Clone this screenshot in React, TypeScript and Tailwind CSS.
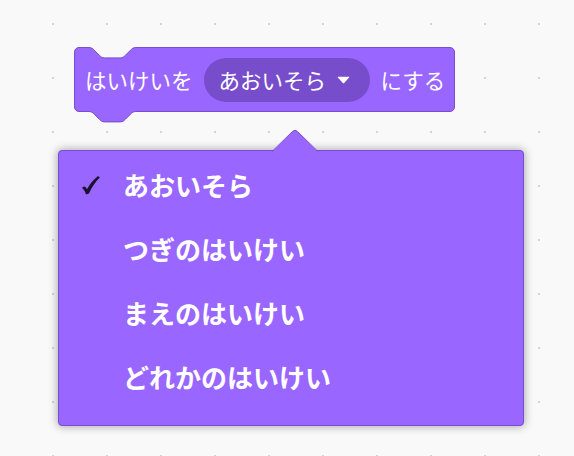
import React from "react";

const W = 381;
const H = 65;
const blockPath = `M 0.5,5 a 4.5,4.5 0 0 1 4.5,-4.5 H 15 c 2.6,0 3.9,1.3 5.2,2.6 l 5.2,5.2 c 1.3,1.3 2.6,2.6 5.2,2.6 h 15.6 c 2.6,0 3.9,-1.3 5.2,-2.6 l 5.2,-5.2 c 1.3,-1.3 2.6,-2.6 5.2,-2.6 H ${W - 5} a 4.5,4.5 0 0 1 4.5,4.5 V ${H - 5} a 4.5,4.5 0 0 1 -4.5,4.5 H 61.8 c -2.6,0 -3.9,1.3 -5.2,2.6 l -5.2,5.2 c -1.3,1.3 -2.6,2.6 -5.2,2.6 h -15.6 c -2.6,0 -3.9,-1.3 -5.2,-2.6 l -5.2,-5.2 c -1.3,-1.3 -2.6,-2.6 -5.2,-2.6 H 5 a 4.5,4.5 0 0 1 -4.5,-4.5 Z`;

const font = { fontFamily: '"Noto Sans CJK JP", "Noto Sans", sans-serif' };

function Check() {
  return (
    <svg width="20" height="20" viewBox="0 0 20 20" className="block">
      <path
        d="M 1.5,12.2 C 3.2,10.8 4.8,11.8 6,14.2 C 8.8,9.2 12.4,4.6 17,1 L 18.8,2.6 C 14.2,7.2 10.6,12.4 8,18.6 L 5,19.4 C 4.2,16.8 3,14.6 1.5,13.6 Z"
        fill="#1d1130"
      />
    </svg>
  );
}

const items = ["あおいそら", "つぎのはいけい", "まえのはいけい", "どれかのはいけい"];

export default function App() {
  return (
    <div
      className="relative w-[574px] h-[456px] overflow-hidden bg-[#f9f9f9] bg-[radial-gradient(circle,#d4d4d4_1px,transparent_1.6px)] bg-[size:54px_54px] bg-[position:-28px_-3px]"
      style={font}
    >
      {/* Block */}
      <div className="absolute left-[74px] top-[47px] w-[381px] h-[65px]">
        <svg
          width={W + 2}
          height={H + 14}
          className="absolute left-0 top-0 overflow-visible"
        >
          <path d={blockPath} fill="#9966FF" stroke="#774DCB" strokeWidth="1" />
        </svg>
        <div className="relative flex h-full items-center pl-[11px] text-[21.5px] text-white leading-none">
          <span>はいけいを</span>
          <div className="ml-[11px] flex h-[44px] w-[166px] items-center rounded-full bg-[#774DCB] pl-[15px]">
            <span>あおいそら</span>
            <svg width="13" height="8" viewBox="0 0 13 8" className="ml-[11px]">
              <path d="M1.2,0.8 H11.8 Q12.8,0.8 12.1,1.6 L7.2,7 Q6.5,7.7 5.8,7 L0.9,1.6 Q0.2,0.8 1.2,0.8 Z" fill="#ffffff" />
            </svg>
          </div>
          <span className="ml-[11px]">にする</span>
        </div>
      </div>

      {/* Dropdown menu */}
      <div className="absolute left-[58px] top-[150px] w-[466px] h-[276px] rounded-[4px] border border-[#774DCB] bg-[#9966FF] shadow-[0_0_8px_1px_rgba(0,0,0,0.3)]">
        <svg
          width="48"
          height="24"
          viewBox="0 0 48 24"
          className="absolute left-[212px] top-[-22px] overflow-visible"
        >
          <path
            d="M 1,23 L 21.6,2.4 Q 24,0 26.4,2.4 L 47,23 Z"
            fill="#9966FF"
          />
          <path
            d="M 1,22.5 L 21.6,2.4 Q 24,0 26.4,2.4 L 47,22.5"
            fill="none"
            stroke="#774DCB"
            strokeWidth="1"
          />
        </svg>
        <div className="flex flex-col pt-[2px]">
          {items.map((t, i) => (
            <div key={t} className="relative flex h-[64px] items-center pl-[64px]">
              {i === 0 && (
                <div className="absolute left-[22px] top-[22px]">
                  <Check />
                </div>
              )}
              <span className="text-[26px] font-bold text-white leading-none">{t}</span>
            </div>
          ))}
        </div>
      </div>
    </div>
  );
}
